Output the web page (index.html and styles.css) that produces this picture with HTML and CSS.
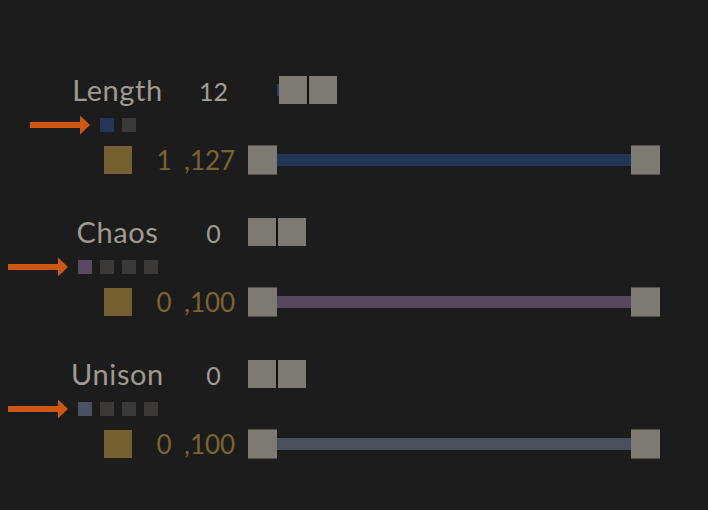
FILE: index.html
```html
<!DOCTYPE html>
<html>
<head>
<meta charset="utf-8">
<link rel="stylesheet" href="styles.css">
</head>
<body>
<div class="panel">
  <section class="param">
    <div class="head">
      <div class="label">Length</div>
      <div class="value">12</div>
      <div class="knobs knobs-offset">
        <span class="sliver"></span>
        <div class="pair"><span class="knob"></span><span class="knob"></span></div>
      </div>
    </div>
    <div class="chiprow">
      <div class="chips">
        <svg class="arrow" width="60" height="20" viewBox="0 0 60 20"><rect x="0" y="7" width="51" height="6" fill="#cc5812"/><polygon points="50,0.5 60,10 50,19.5" fill="#cc5812"/></svg>
        <span class="chip chip-blue"></span><span class="chip"></span>
      </div>
    </div>
    <div class="range">
      <span class="gold"></span>
      <span class="min">1</span>
      <span class="max">,127</span>
      <div class="slider">
        <span class="thumb"></span><span class="track track-blue"></span><span class="thumb"></span>
      </div>
    </div>
  </section>

  <section class="param">
    <div class="head">
      <div class="label">Chaos</div>
      <div class="value">0</div>
      <div class="knobs">
        <div class="pair"><span class="knob"></span><span class="knob"></span></div>
      </div>
    </div>
    <div class="chiprow">
      <div class="chips">
        <svg class="arrow" width="60" height="20" viewBox="0 0 60 20"><rect x="0" y="7" width="51" height="6" fill="#cc5812"/><polygon points="50,0.5 60,10 50,19.5" fill="#cc5812"/></svg>
        <span class="chip chip-purple"></span><span class="chip"></span><span class="chip"></span><span class="chip"></span>
      </div>
    </div>
    <div class="range">
      <span class="gold"></span>
      <span class="min">0</span>
      <span class="max">,100</span>
      <div class="slider">
        <span class="thumb"></span><span class="track track-purple"></span><span class="thumb"></span>
      </div>
    </div>
  </section>

  <section class="param">
    <div class="head">
      <div class="label">Unison</div>
      <div class="value">0</div>
      <div class="knobs">
        <div class="pair"><span class="knob"></span><span class="knob"></span></div>
      </div>
    </div>
    <div class="chiprow">
      <div class="chips">
        <svg class="arrow" width="60" height="20" viewBox="0 0 60 20"><rect x="0" y="7" width="51" height="6" fill="#cc5812"/><polygon points="50,0.5 60,10 50,19.5" fill="#cc5812"/></svg>
        <span class="chip chip-slate"></span><span class="chip"></span><span class="chip"></span><span class="chip"></span>
      </div>
    </div>
    <div class="range">
      <span class="gold"></span>
      <span class="min">0</span>
      <span class="max">,100</span>
      <div class="slider">
        <span class="thumb"></span><span class="track track-slate"></span><span class="thumb"></span>
      </div>
    </div>
  </section>
</div>
</body>
</html>
```

FILE: styles.css
```css
html, body {
  margin: 0;
  padding: 0;
  background: #1b1c1b;
}
body {
  width: 708px;
  height: 510px;
  overflow: hidden;
  font-family: "Lato", "Open Sans", sans-serif;
}
.panel {
  padding-top: 76px;
  display: flex;
  flex-direction: column;
  gap: 43px;
}
.param {
  display: flex;
  flex-direction: column;
}
.head {
  display: flex;
  height: 28px;
  padding-left: 56px;
}
.label {
  width: 123px;
  text-align: center;
  color: #9f9a93;
  font-size: 29px;
  line-height: 28px;
  letter-spacing: 0.6px;
}
.value {
  width: 69px;
  text-align: center;
  color: #a19c95;
  font-size: 25px;
  line-height: 28px;
  padding-top: 1px;
}
.knobs {
  display: flex;
  align-items: center;
}
.knobs-offset {
  margin-left: 29px;
}
.sliver {
  width: 2px;
  height: 12px;
  background: #2c3f68;
}
.pair {
  display: flex;
  gap: 2px;
  background: #0f0f0f;
}
.knob {
  width: 28px;
  height: 28px;
  background: #7d7973;
}
.chiprow {
  margin-top: 14px;
  padding-left: 56px;
  width: 123px;
  display: flex;
  justify-content: center;
}
.chips {
  position: relative;
  display: flex;
  gap: 8px;
}
.arrow {
  position: absolute;
  right: calc(100% + 10px);
  top: -3px;
}
.chip {
  width: 14px;
  height: 14px;
  background: #3b3a39;
}
.chip-blue { background: #243558; }
.chip-purple { background: #5b4964; }
.chip-slate { background: #4c5161; }
.range {
  margin-top: 13px;
  display: flex;
  align-items: center;
  height: 30px;
  padding-left: 104px;
}
.gold {
  width: 28px;
  height: 28px;
  background: #77602f;
}
.min, .max {
  color: #7b6431;
  font-size: 26px;
  line-height: 30px;
  height: 30px;
}
.min {
  margin-left: 12px;
  width: 40px;
  text-align: center;
}
.max {
  width: 64px;
}
.slider {
  width: 412px;
  display: flex;
  align-items: center;
}
.thumb {
  width: 29px;
  height: 28px;
  background: #7d7973;
  border-top: 1px solid #55524e;
  border-bottom: 1px solid #55524e;
}
.track {
  flex: 1;
  height: 12px;
}
.track-blue { background: #233556; }
.track-purple { background: #57475f; }
.track-slate { background: #4b505e; }
```
